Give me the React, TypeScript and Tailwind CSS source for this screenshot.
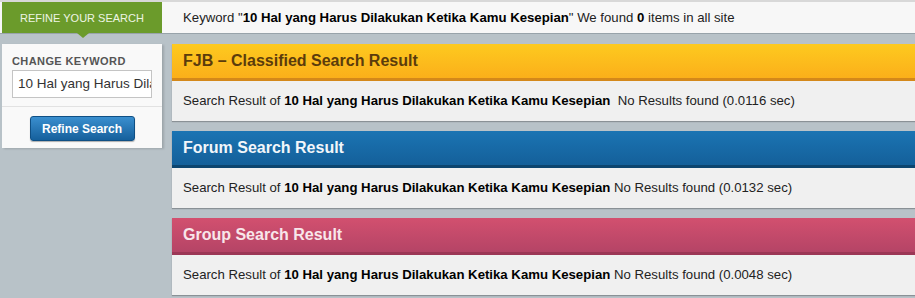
import React from "react";

const KW = "10 Hal yang Harus Dilakukan Ketika Kamu Kesepian";

function Panel({
  title,
  time,
  head,
  border,
  titleColor,
  extraSpace,
}: {
  title: string;
  time: string;
  head: string;
  border: string;
  titleColor: string;
  extraSpace?: boolean;
}) {
  return (
    <div className="flex flex-col shadow-[0_1px_1px_rgba(0,0,0,0.25)]">
      <div className={`h-[37px] flex items-center pl-[11px] border-b-[3px] ${head} ${border}`}>
        <span className={`text-[16px] font-bold ${titleColor}`}>{title}</span>
      </div>
      <div className="h-[40px] flex items-center pl-[11px] bg-[#f0f0f0] text-[13.2px] text-[#222]">
        <span>
          Search Result of <b className="text-black">{KW}</b>
          {extraSpace ? "\u00a0 " : " "}No Results found ({time} sec)
        </span>
      </div>
    </div>
  );
}

export default function App() {
  return (
    <div className="w-[915px] h-[298px] overflow-hidden bg-[#b8c2c8] font-['Liberation_Sans',Arial,sans-serif]">
      <div className="h-[34px] bg-[#f7f7f7] border-t-[2px] border-t-[#d8d8d8] border-b border-b-[#98a3aa] flex">
        <div className="relative ml-[2px] w-[160px] h-full bg-[#6b9b2b] flex items-center justify-center">
          <span className="text-[11px] text-[#eef5e4] pt-[1px]">REFINE YOUR SEARCH</span>
          <div className="absolute left-[75px] -bottom-[5px] w-0 h-0 border-l-[6px] border-r-[6px] border-t-[5px] border-l-transparent border-r-transparent border-t-[#6b9b2b]" />
        </div>
        <div className="flex items-center pl-[21px] text-[13.2px] text-[#222]">
          <span>
            Keyword "<b className="text-black">{KW}</b>" We found <b className="text-black">0</b> items in all site
          </span>
        </div>
      </div>
      <div className="flex gap-[10px] pt-[10px] pl-[2px]">
        <div className="w-[160px] h-[104px] bg-[#f9f9f9] shadow-[2px_1px_2px_rgba(0,0,0,0.15)] flex flex-col">
          <div className="pl-[10px] pt-[10px] leading-[14px] text-[11px] font-bold text-[#555] tracking-[0.4px]">CHANGE KEYWORD</div>
          <div className="mx-[10px] mt-[2px] h-[28px] bg-white border border-[#c4c4c4] flex items-center overflow-hidden">
            <span className="pl-[5px] text-[13.5px] text-[#333] whitespace-nowrap">10 Hal yang Harus Dilakukan</span>
          </div>
          <div className="mt-[8px] border-t border-[#e2e2e2]" />
          <div className="flex justify-center mt-[9px]">
            <button className="w-[105px] h-[25px] rounded-[3px] border border-[#0f4f84] bg-gradient-to-b from-[#3a8fcf] to-[#15609c] text-white text-[12px] font-bold shadow-[0_1px_1px_rgba(0,0,0,0.3)]">
              Refine Search
            </button>
          </div>
        </div>
        <div className="flex-1 flex flex-col gap-[10px] -mr-[20px]">
          <Panel
            title="FJB – Classified Search Result"
            time="0.0116"
            head="bg-gradient-to-b from-[#fdca1f] to-[#fbaf1a]"
            border="border-b-[#d4881a]"
            titleColor="text-[#5b3c0c]"
            extraSpace
          />
          <Panel
            title="Forum Search Result"
            time="0.0132"
            head="bg-gradient-to-b from-[#1b74b3] to-[#14609a]"
            border="border-b-[#0c456f]"
            titleColor="text-[#f2f6fa]"
          />
          <Panel
            title="Group Search Result"
            time="0.0048"
            head="bg-gradient-to-b from-[#d2506f] to-[#b54466]"
            border="border-b-[#9c3756]"
            titleColor="text-[#f8e6ea]"
          />
        </div>
      </div>
    </div>
  );
}
